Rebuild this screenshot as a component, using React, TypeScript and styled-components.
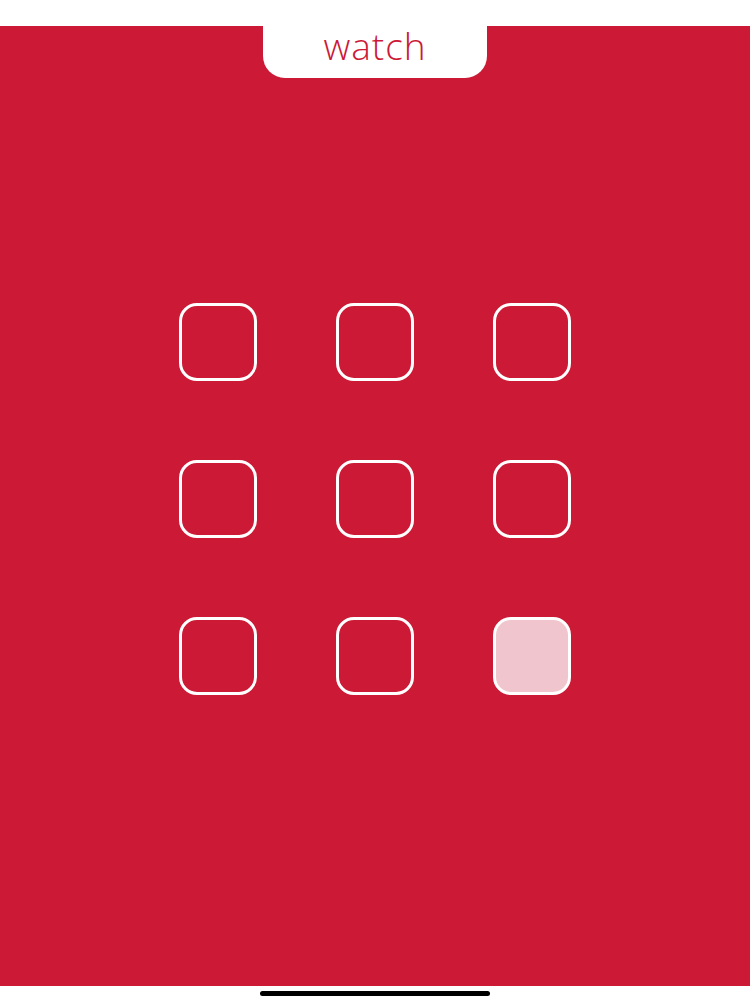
import styled, { createGlobalStyle } from "styled-components";

const GlobalStyle = createGlobalStyle`
  html, body {
    margin: 0;
    padding: 0;
    background: #ffffff;
  }
  body {
    font-family: "Open Sans", "Liberation Sans", sans-serif;
  }
`;

const RED = "#cc1936";

const Screen = styled.div`
  width: 750px;
  height: 1000px;
  display: flex;
  flex-direction: column;
  background: #ffffff;
  padding-top: 26px;
  box-sizing: border-box;
`;

const Panel = styled.main`
  height: 960px;
  background: ${RED};
  display: flex;
  flex-direction: column;
  align-items: center;
`;

const Tab = styled.div`
  width: 224px;
  height: 52px;
  background: #ffffff;
  border-radius: 0 0 22px 22px;
  display: flex;
  align-items: center;
  justify-content: center;
  color: ${RED};
  font-size: 37px;
  font-weight: 300;
  letter-spacing: 1px;
  line-height: 1;
  padding-bottom: 14px;
  box-sizing: border-box;
`;

const Grid = styled.div`
  margin-top: 225px;
  display: grid;
  grid-template-columns: repeat(3, 78px);
  grid-auto-rows: 78px;
  gap: 79px;
`;

const Cell = styled.button<{ $active?: boolean }>`
  width: 78px;
  height: 78px;
  padding: 0;
  border: 3px solid #ffffff;
  border-radius: 18px;
  background: ${(p) => (p.$active ? "#f0c5cd" : "transparent")};
  box-sizing: border-box;
  cursor: pointer;
`;

const Footer = styled.div`
  flex: 1;
  display: flex;
  justify-content: center;
  padding-top: 5px;
`;

const HomeBar = styled.div`
  width: 230px;
  height: 5px;
  border-radius: 3px;
  background: #000000;
`;

const cells = Array.from({ length: 9 }, (_, i) => i);

export default function App() {
  return (
    <>
      <GlobalStyle />
      <Screen>
        <Panel>
          <Tab>watch</Tab>
          <Grid>
            {cells.map((i) => (
              <Cell key={i} $active={i === 8} aria-label={`cell ${i + 1}`} />
            ))}
          </Grid>
        </Panel>
        <Footer>
          <HomeBar />
        </Footer>
      </Screen>
    </>
  );
}
